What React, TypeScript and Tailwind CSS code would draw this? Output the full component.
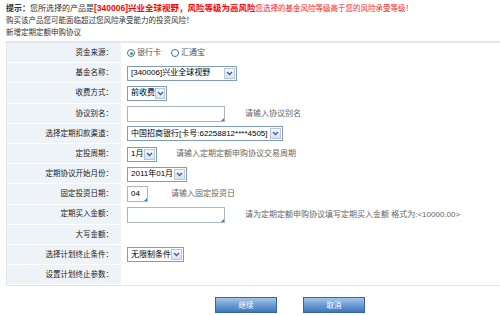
import React from "react";

const FONT = { fontFamily: '"Liberation Sans", "Noto Sans CJK SC", sans-serif' };

function Chevron() {
  return (
    <span className="flex h-[11px] w-[11px] items-center justify-center border border-[#b7c8de] bg-gradient-to-b from-[#f4f7fc] to-[#d6e2f2]">
      <svg width="7" height="5" viewBox="0 0 7 5">
        <path d="M1 1 L3.5 3.5 L6 1" fill="none" stroke="#4d6185" strokeWidth="1.4" />
      </svg>
    </span>
  );
}

function Select({ text, width }: { text: string; width: string }) {
  return (
    <div className={`flex h-[15px] items-center justify-between border border-[#7f9db9] bg-white pl-[3px] pr-[1px] ${width}`}>
      <span className="whitespace-nowrap text-[8px] text-black">{text}</span>
      <Chevron />
    </div>
  );
}

function TextBox({ width, value }: { width: string; value?: string }) {
  return (
    <div className={`relative h-[16px] border border-[#aab5c2] bg-white pl-[3px] text-[8px] leading-[14px] text-black ${width}`}>
      {value}
      <span className="absolute bottom-0 right-0 h-0 w-0 border-b-[3px] border-l-[3px] border-b-[#3b7ad0] border-l-transparent" />
    </div>
  );
}

function Hint({ children, ml }: { children: React.ReactNode; ml: string }) {
  return <span className={`whitespace-nowrap text-[8px] text-[#666] ${ml}`}>{children}</span>;
}

function Radio({ checked }: { checked?: boolean }) {
  return (
    <span className="flex h-[8px] w-[8px] items-center justify-center rounded-full border border-[#3c6fb0] bg-white">
      {checked && <span className="h-[3px] w-[3px] rounded-full bg-[#2fae3d]" />}
    </span>
  );
}

const rows: { label: string; content: React.ReactNode }[] = [
  {
    label: "资金来源：",
    content: (
      <div className="flex items-center text-[8px] text-[#555]">
        <Radio checked />
        <span className="ml-[2px]">银行卡</span>
        <span className="ml-[10px]"><Radio /></span>
        <span className="ml-[2px]">汇通宝</span>
      </div>
    ),
  },
  { label: "基金名称：", content: <Select text="[340006]兴业全球视野" width="w-[110px]" /> },
  { label: "收费方式：", content: <Select text="前收费" width="w-[40px]" /> },
  {
    label: "协议别名：",
    content: (
      <div className="flex items-center">
        <TextBox width="w-[98px]" />
        <Hint ml="ml-[20px]">请输入协议别名</Hint>
      </div>
    ),
  },
  { label: "选择定期扣款渠道：", content: <Select text="中国招商银行[卡号:62258812****4505]" width="w-[156px]" /> },
  {
    label: "定投周期：",
    content: (
      <div className="flex items-center">
        <Select text="1月" width="w-[30px]" />
        <Hint ml="ml-[19px]">请输入定期定额申购协议交易周期</Hint>
      </div>
    ),
  },
  { label: "定期协议开始月份：", content: <Select text="2011年01月" width="w-[60px]" /> },
  {
    label: "固定投资日期：",
    content: (
      <div className="flex items-center">
        <TextBox width="w-[21px]" value="04" />
        <Hint ml="ml-[23px]">请输入固定投资日</Hint>
      </div>
    ),
  },
  {
    label: "定期买入金额：",
    content: (
      <div className="flex items-center">
        <TextBox width="w-[98px]" />
        <Hint ml="ml-[20px]">请为定期定额申购协议填写定期买入金额 格式为:&lt;10000.00&gt;</Hint>
      </div>
    ),
  },
  { label: "大写金额：", content: null },
  { label: "选择计划终止条件：", content: <Select text="无限制条件" width="w-[57px]" /> },
  { label: "设置计划终止参数：", content: null },
];

export default function App() {
  return (
    <div className="h-[315px] w-[500px] overflow-hidden bg-white" style={FONT}>
      <div className="px-[6px] pt-[2px] text-[7.5px] leading-[12px] text-[#333]">
        <p className="whitespace-nowrap text-[8px]">
          <span className="font-bold">提示：</span>您所选择的产品是
          <span className="text-[8.5px] font-bold text-[#ff0000]">[340006]兴业全球视野，风险等级为高风险</span>
          <span className="text-[7.5px] text-[#ff2020]">您选择的基金风险等级高于您的风险承受等级！</span>
        </p>
        <p>购买该产品您可能面临超过您风险承受能力的投资风险！</p>
        <p>新增定期定额申购协议</p>
      </div>

      <div className="ml-[6px] mt-[2px] border-t-2 border-b border-l border-[#e3e6ea]">
        {rows.map((r) => (
          <div key={r.label} className="grid h-[20.2px] grid-cols-[114px_1fr]">
            <div className="flex items-center justify-end border-b border-white bg-[#eef3f8] pr-[8px] text-[7.5px] text-[#222]">
              {r.label}
            </div>
            <div className="flex items-center pl-[6px]">{r.content}</div>
          </div>
        ))}
      </div>

      <div className="mt-[11px] flex gap-[26px] pl-[215px]">
        {["继续", "取消"].map((t) => (
          <button
            key={t}
            className="h-[16px] w-[62px] border border-[#3465a4] bg-gradient-to-b from-[#a4c6ea] via-[#6c9bd2] to-[#3f77bd] text-[7.5px] text-white"
          >
            {t}
          </button>
        ))}
      </div>
    </div>
  );
}
